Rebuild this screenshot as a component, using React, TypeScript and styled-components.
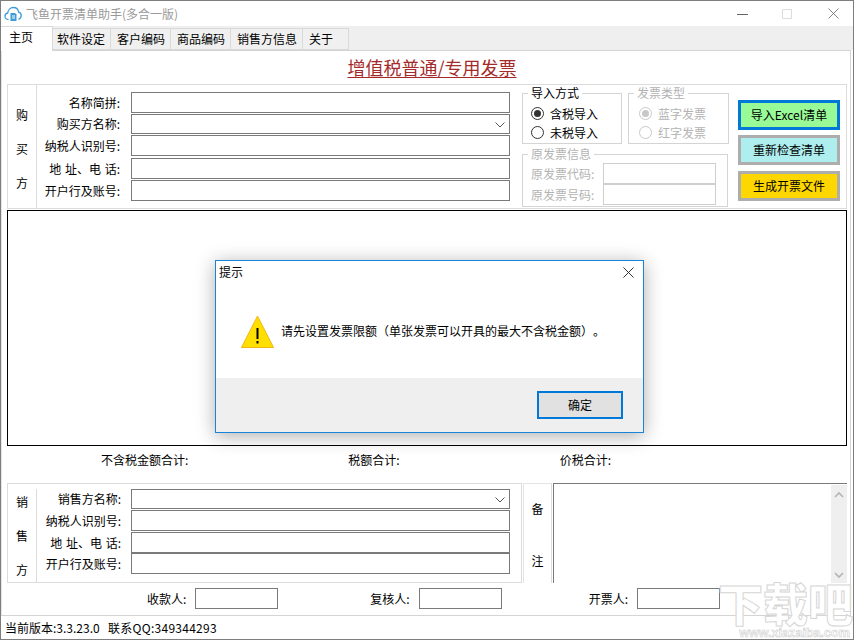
import styled, { createGlobalStyle } from 'styled-components';

const GlobalStyle = createGlobalStyle`
  html, body {
    margin: 0;
    padding: 0;
    background: #fff;
    overflow: hidden;
  }
  * {
    box-sizing: border-box;
  }
`;

const Win = styled.div`
  position: relative;
  width: 854px;
  height: 640px;
  display: flex;
  flex-direction: column;
  background: #fff;
  border: 1px solid #7e7e7e;
  overflow: hidden;
  color: #000;
  font-family: 'Noto Sans CJK SC', 'Liberation Sans', sans-serif;
  font-size: 12px;
  line-height: 16px;
  text-spacing-trim: space-all;
`;

const TitleBar = styled.div`
  height: 25px;
  flex: none;
  display: flex;
  align-items: center;
  padding-left: 3px;
`;

const AppTitle = styled.div`
  margin-left: 4px;
  color: #9a9a9a;
  white-space: nowrap;
`;

const WinButton = styled.div<{ $left: number }>`
  margin-left: ${({ $left }) => $left}px;
  width: 12px;
  height: 12px;
  display: flex;
`;

const TabStrip = styled.div`
  height: 24px;
  flex: none;
  display: flex;
  align-items: flex-end;
  background: #efefef;
  position: relative;
  z-index: 1;
`;

const Tab = styled.div<{ $w: number; $pad: number; $active?: boolean }>`
  width: ${({ $w }) => $w}px;
  height: ${({ $active }) => ($active ? 25 : 22)}px;
  margin-bottom: ${({ $active }) => ($active ? -1 : 0)}px;
  padding-top: 2px;
  padding-left: ${({ $pad }) => $pad}px;
  background: ${({ $active }) => ($active ? '#fff' : '#f0f0f0')};
  border: 1px solid #d9d9d9;
  border-left: none;
  border-bottom: ${({ $active }) => ($active ? 'none' : '1px solid #d9d9d9')};
  white-space: nowrap;
`;

const Panel = styled.div`
  width: 850px;
  height: 566px;
  flex: none;
  padding: 0 3px 0 5px;
  border: 1px solid #d4d4d4;
  border-left-color: #e4e4e4;
`;

const Heading = styled.div`
  height: 33px;
  padding: 5px 0 0 10px;
  text-align: center;
  font-size: 18px;
  line-height: 22px;
  color: #a52a2a;
  text-decoration: underline;
  text-underline-offset: 2px;
  text-decoration-thickness: 1px;
`;

const TopRow = styled.div`
  height: 125px;
  display: flex;
  border: 1px solid #dcdcdc;
`;

const Group = styled.div<{ $w: number; $pad: number }>`
  width: ${({ $w }) => $w}px;
  flex: none;
  display: flex;
  padding-top: ${({ $pad }) => $pad}px;
`;

const SideLabel = styled.div<{ $gap?: number; $top?: number }>`
  width: 29px;
  flex: none;
  align-self: stretch;
  display: flex;
  flex-direction: column;
  align-items: center;
  justify-content: center;
  gap: ${({ $gap }) => $gap ?? 18}px;
  padding-top: ${({ $top }) => $top ?? 0}px;
  border-right: 1px solid #dcdcdc;
`;

const Fields = styled.div`
  flex: 1;
  display: flex;
  flex-direction: column;
`;

const FieldRow = styled.div<{ $top?: number; $h?: number }>`
  display: flex;
  align-items: center;
  margin-top: ${({ $top }) => $top ?? 0}px;
  height: ${({ $h }) => $h ?? 21}px;
`;

const FieldLabel = styled.div<{ $shift?: number }>`
  width: ${({ $shift }) => 83 + ($shift ?? 0)}px;
  margin-right: ${({ $shift }) => 11 - ($shift ?? 0)}px;
  flex: none;
  text-align: right;
  white-space: pre;
  word-spacing: 1px;
`;

const TextBox = styled.div<{ $w?: number; $h?: number; $muted?: boolean }>`
  position: relative;
  width: ${({ $w }) => ($w ? `${$w}px` : 'auto')};
  height: ${({ $h }) => ($h ? `${$h}px` : '100%')};
  flex: ${({ $w }) => ($w ? 'none' : '0 0 379px')};
  border: 1px solid ${({ $muted }) => ($muted ? '#cfcfcf' : '#7a7a7a')};
  background: #fff;
`;

const Chevron = styled.svg`
  position: absolute;
  right: 3px;
  top: 6px;
`;

const SidePane = styled.div`
  flex: 1;
  display: flex;
  padding-left: 5px;
`;

const OptionCol = styled.div`
  width: 207px;
  flex: none;
  display: flex;
  flex-direction: column;
  gap: 2px;
`;

const OptionRow = styled.div`
  display: flex;
  gap: 6px;
`;

const Box = styled.fieldset<{ $w: number; $h: number; $top?: number; $muted?: boolean }>`
  width: ${({ $w }) => $w}px;
  height: ${({ $h }) => $h}px;
  margin: 0;
  padding: ${({ $top }) => $top ?? 3}px 0 0 8px;
  border: 1px solid #d4d4d4;
  min-width: 0;
  color: ${({ $muted }) => ($muted ? '#b3b3b3' : '#000')};

  legend {
    margin-left: -3px;
    padding: 0 3px;
  }
`;

const RadioRow = styled.div<{ $indent?: number }>`
  height: 19px;
  margin-left: ${({ $indent }) => $indent ?? 0}px;
  display: flex;
  align-items: center;
  gap: 6px;
  white-space: nowrap;
`;

const RadioDot = styled.span<{ $on?: boolean; $muted?: boolean }>`
  width: 13px;
  height: 13px;
  flex: none;
  border-radius: 50%;
  border: 1px solid ${({ $muted }) => ($muted ? '#c8c8c8' : '#333')};
  display: flex;
  align-items: center;
  justify-content: center;

  &::after {
    content: '';
    display: ${({ $on }) => ($on ? 'block' : 'none')};
    width: 7px;
    height: 7px;
    border-radius: 50%;
    background: ${({ $muted }) => ($muted ? '#c8c8c8' : '#333')};
  }
`;

const OrigRow = styled.div`
  display: flex;
  align-items: center;
  height: 21px;
  gap: 9px;
  white-space: nowrap;
`;

const ActionCol = styled.div`
  margin-left: 9px;
  padding-top: 15px;
  display: flex;
  flex-direction: column;
  width: 102px;
`;

const ActionButton = styled.div<{ $bg: string; $edge: string; $top: number }>`
  height: 30px;
  margin-top: ${({ $top }) => $top}px;
  display: flex;
  align-items: center;
  justify-content: center;
  background: ${({ $bg }) => $bg};
  border: 3px solid ${({ $edge }) => $edge};
`;

const DataArea = styled.div`
  height: 236px;
  margin-top: 1px;
  border: 1px solid #000;
`;

const Totals = styled.div`
  height: 37px;
  padding: 6px 0 0 94px;
  display: flex;
  gap: 160px;
`;

const SellerRow = styled.div`
  height: 100px;
  display: flex;
`;

const SellerBox = styled(Group)`
  border: 1px solid #dcdcdc;
`;

const RemarkLabel = styled(SideLabel)`
  margin-left: 1px;
  border: 1px solid #e4e4e4;
  border-bottom: none;
  border-right: 1px solid #dcdcdc;
`;

const RemarkBox = styled.div`
  flex: 1;
  margin-left: 1px;
  display: flex;
  justify-content: flex-end;
  border-top: 1px solid #7a7a7a;
  border-left: 1px solid #7a7a7a;
`;

const ScrollTrack = styled.div`
  width: 16px;
  display: flex;
  flex-direction: column;
  align-items: center;
  justify-content: space-between;
  padding: 6px 0 4px;
  margin-top: 1px;
  background: #efefef;
`;

const Signers = styled.div`
  display: flex;
  height: 21px;
  margin-top: 5px;
`;

const Signer = styled.div<{ $left: number }>`
  display: flex;
  align-items: center;
  gap: 9px;
  margin-left: ${({ $left }) => $left}px;
`;

const StatusBar = styled.div`
  flex: 1;
  padding: 4px 0 0 4px;
  white-space: pre;
  word-spacing: 1.5px;
`;

const ContactText = styled.span`
  letter-spacing: 0.27px;
`;

const Watermark = styled.div`
  position: absolute;
  left: 717px;
  top: 575px;
  width: 135px;
  pointer-events: none;
  font-family: 'Noto Sans CJK SC', sans-serif;
  font-weight: 900;
  color: #fff;
  -webkit-text-stroke: 1px #d6d6d6;
`;

const WatermarkMain = styled.div`
  height: 53px;
  font-size: 45px;
  line-height: 53px;
  white-space: nowrap;
`;

const WatermarkUrl = styled.div`
  height: 9px;
  padding-right: 3px;
  text-align: right;
  font-family: 'Liberation Sans', sans-serif;
  font-size: 12.6px;
  line-height: 9px;
  -webkit-text-stroke: 0.5px #c8c8c8;
  white-space: nowrap;
`;

const Dialog = styled.div`
  position: absolute;
  left: 214px;
  top: 259px;
  width: 429px;
  height: 173px;
  display: flex;
  flex-direction: column;
  background: #fff;
  border: 1px solid #1883d7;
  box-shadow: 0 3px 18px rgba(0, 0, 0, 0.32);
`;

const DialogHead = styled.div`
  height: 24px;
  flex: none;
  display: flex;
  align-items: center;
  justify-content: space-between;
  padding: 0 9px 2px 3px;
`;

const DialogBody = styled.div`
  flex: 1;
  display: flex;
  align-items: center;
  gap: 7px;
  padding: 0 0 1px 25px;
`;

const DialogFoot = styled.div`
  height: 54px;
  flex: none;
  display: flex;
  align-items: center;
  justify-content: flex-end;
  padding: 0 20px 0 0;
  background: #efefef;
`;

const OkButton = styled.div`
  width: 86px;
  height: 28px;
  display: flex;
  align-items: center;
  justify-content: center;
  background: #e1e1e1;
  border: 2px solid #0078d7;
`;

const ChevronDown = () => (
  <Chevron width="12" height="8" viewBox="0 0 12 8" fill="none" stroke="#555" strokeWidth="1">
    <path d="M1.5 1.5 6 6l4.5-4.5" />
  </Chevron>
);

const ScrollArrow = ({ up }: { up?: boolean }) => (
  <svg width="10" height="7" viewBox="0 0 10 7" fill="none" stroke="#b4b4b4" strokeWidth="1.6">
    <path d={up ? 'M1 6l4-4 4 4' : 'M1 1l4 4 4-4'} />
  </svg>
);

const CloudIcon = () => (
  <svg width="18" height="16" viewBox="0 0 18 16" fill="none">
    <path d="M4.5 13.5C2.5 13.5 1 12 1 10.2 1 8.5 2.2 7.2 3.7 7 4 4 6.3 1.5 9.3 1.5c2.8 0 5 2 5.3 4.6 1.5.3 2.6 1.7 2.6 3.5 0 1.6-1 3.2-2.7 3.7" stroke="#3f9bd8" strokeWidth="1.3" />
    <path d="M6.5 7h4.5l1.5 1.5V15h-6z" fill="#3f9bd8" />
    <path d="M8 10h3M8 12h3" stroke="#fff" strokeWidth="1" />
  </svg>
);

const WarningIcon = () => (
  <svg width="33" height="33" viewBox="0 0 33 33">
    <path d="M16.5 1 32.5 32.5H.5z" fill="#ffdf00" stroke="#f2b611" strokeWidth="1" />
    <path d="M15.5 13h2v11h-2zM15.5 26h2v2.5h-2z" fill="#000" />
  </svg>
);

const CloseIcon = ({ color, size }: { color: string; size: number }) => (
  <svg width={size} height={size} viewBox="0 0 12 12" fill="none" stroke={color} strokeWidth="1">
    <path d="M.5.5l11 11M11.5.5l-11 11" />
  </svg>
);

const buyerFields = [
  { label: '名称简拼:', top: 7 },
  { label: '购买方名称:', top: 1, h: 20, select: true },
  { label: '纳税人识别号:', top: 1 },
  { label: '地 址、电 话:', top: 2 },
  { label: '开户行及账号:', top: 1 },
];

const sellerFields = [
  { label: '销售方名称:', top: 0, h: 20, select: true },
  { label: '纳税人识别号:', top: 1 },
  { label: '地 址、电 话:', top: 1 },
  { label: '开户行及账号:', top: 0 },
];

const tabs = [
  { label: '软件设定', w: 58, pad: 4 },
  { label: '客户编码', w: 60, pad: 6 },
  { label: '商品编码', w: 60, pad: 6 },
  { label: '销售方信息', w: 72, pad: 6 },
  { label: '关于', w: 46, pad: 6 },
];

const App = () => {
  return (
    <>
      <GlobalStyle />
      <Win>
        <TitleBar>
          <CloudIcon />
          <AppTitle>飞鱼开票清单助手(多合一版)</AppTitle>
          <WinButton $left={559}>
            <svg width="12" height="12" viewBox="0 0 12 12" stroke="#666"><path d="M0 6.5h11" /></svg>
          </WinButton>
          <WinButton $left={33}>
            <svg width="12" height="12" viewBox="0 0 12 12" fill="none" stroke="#dcdcdc"><path d="M.5 1.5h9v9h-9z" /></svg>
          </WinButton>
          <WinButton $left={34}>
            <CloseIcon color="#777" size={11} />
          </WinButton>
        </TitleBar>

        <TabStrip>
          <Tab $w={52} $pad={8} $active>主页</Tab>
          {tabs.map((t) => (
            <Tab key={t.label} $w={t.w} $pad={t.pad}>{t.label}</Tab>
          ))}
        </TabStrip>

        <Panel>
          <Heading>增值税普通/专用发票</Heading>

          <TopRow>
            <Group $w={509} $pad={0}>
              <SideLabel $top={5}>
                <span>购</span>
                <span>买</span>
                <span>方</span>
              </SideLabel>
              <Fields>
                {buyerFields.map((f) => (
                  <FieldRow key={f.label} $top={f.top} $h={f.h}>
                    <FieldLabel>{f.label}</FieldLabel>
                    <TextBox>{f.select && <ChevronDown />}</TextBox>
                  </FieldRow>
                ))}
              </Fields>
            </Group>

            <SidePane>
              <OptionCol>
                <OptionRow>
                  <Box $w={100} $h={59}>
                    <legend>导入方式</legend>
                    <RadioRow><RadioDot $on />含税导入</RadioRow>
                    <RadioRow><RadioDot />未税导入</RadioRow>
                  </Box>
                  <Box $w={101} $h={59} $muted>
                    <legend>发票类型</legend>
                    <RadioRow $indent={2}><RadioDot $on $muted />蓝字发票</RadioRow>
                    <RadioRow $indent={2}><RadioDot $muted />红字发票</RadioRow>
                  </Box>
                </OptionRow>
                <Box $w={206} $h={61} $top={1} $muted>
                  <legend>原发票信息</legend>
                  <OrigRow>原发票代码:<TextBox $w={113} $h={21} $muted /></OrigRow>
                  <OrigRow>原发票号码:<TextBox $w={113} $h={21} $muted /></OrigRow>
                </Box>
              </OptionCol>

              <ActionCol>
                <ActionButton $bg="#98fb98" $edge="#0078d7" $top={0}>导入Excel清单</ActionButton>
                <ActionButton $bg="#afeeee" $edge="#adadad" $top={5}>重新检查清单</ActionButton>
                <ActionButton $bg="#ffd700" $edge="#adadad" $top={6}>生成开票文件</ActionButton>
              </ActionCol>
            </SidePane>
          </TopRow>

          <DataArea />

          <Totals>
            <span>不含税金额合计:</span>
            <span>税额合计:</span>
            <span>价税合计:</span>
          </Totals>

          <SellerRow>
            <SellerBox $w={515} $pad={5}>
              <SideLabel $top={1}>
                <span>销</span>
                <span>售</span>
                <span>方</span>
              </SideLabel>
              <Fields>
                {sellerFields.map((f) => (
                  <FieldRow key={f.label} $top={f.top} $h={f.h}>
                    <FieldLabel $shift={1}>{f.label}</FieldLabel>
                    <TextBox>{f.select && <ChevronDown />}</TextBox>
                  </FieldRow>
                ))}
              </Fields>
            </SellerBox>
            <RemarkLabel $gap={36} $top={2}>
              <span>备</span>
              <span>注</span>
            </RemarkLabel>
            <RemarkBox>
              <ScrollTrack>
                <ScrollArrow up />
                <ScrollArrow />
              </ScrollTrack>
            </RemarkBox>
          </SellerRow>

          <Signers>
            <Signer $left={140}>收款人:<TextBox $w={83} /></Signer>
            <Signer $left={92}>复核人:<TextBox $w={83} /></Signer>
            <Signer $left={87}>开票人:<TextBox $w={83} /></Signer>
          </Signers>
        </Panel>

        <StatusBar>当前版本:3.3.23.0  <ContactText>联系QQ:349344293</ContactText></StatusBar>

        <Watermark>
          <WatermarkMain>下载吧</WatermarkMain>
          <WatermarkUrl>www.xiazaiba.com</WatermarkUrl>
        </Watermark>

        <Dialog>
          <DialogHead>
            提示
            <CloseIcon color="#222" size={11} />
          </DialogHead>
          <DialogBody>
            <WarningIcon />
            <span>请先设置发票限额（单张发票可以开具的最大不含税金额）。</span>
          </DialogBody>
          <DialogFoot>
            <OkButton>确定</OkButton>
          </DialogFoot>
        </Dialog>
      </Win>
    </>
  );
};

export default App;
